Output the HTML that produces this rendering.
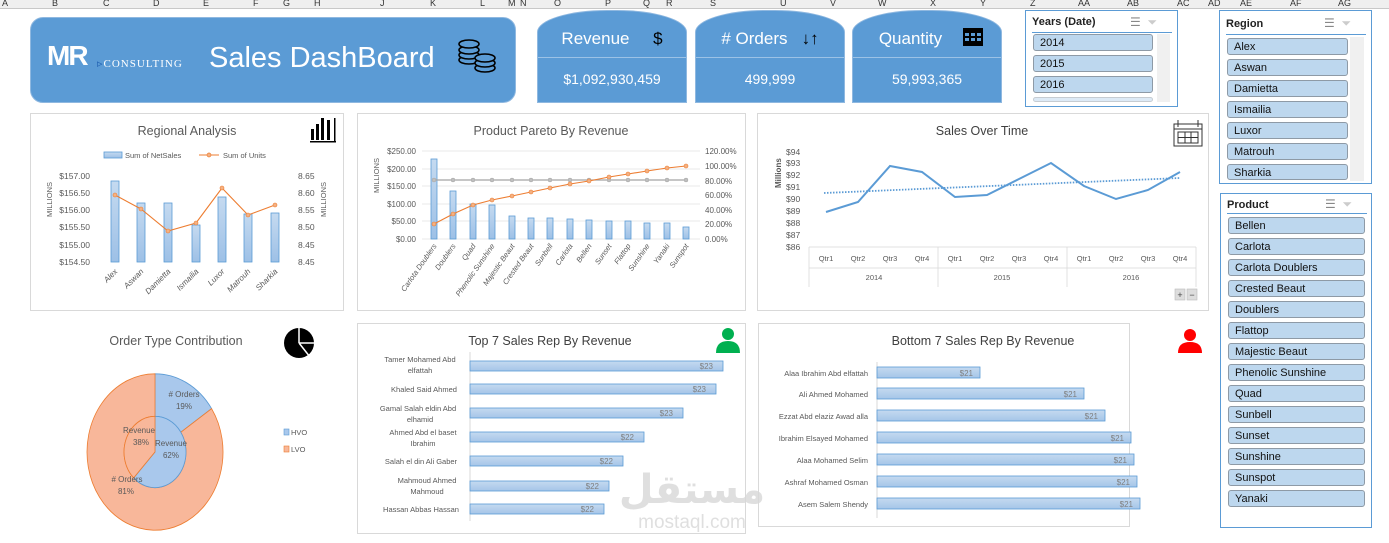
<!DOCTYPE html>
<html><head><meta charset="utf-8"><style>
body{margin:0;width:1389px;height:543px;overflow:hidden;background:#fff;font-family:"Liberation Sans",sans-serif;position:relative}
.a{position:absolute}
.hdr{position:absolute;left:0;top:0;width:1389px;height:8px;background:#efefef;border-bottom:1px solid #c8c8c8;font-size:9px;line-height:6px;color:#333;overflow:hidden}
.hdr span{position:absolute;top:0}
.banner{left:30px;top:17px;width:486px;height:86px;background:#5b9bd5;border-radius:13px;border:1px solid #8fb8e0;box-sizing:border-box}
.kpi{background:#5b9bd5;color:#fff;border-radius:70px 70px 0 0/22px 22px 0 0;border:1px solid #8fb8e0;box-sizing:border-box}
.kpi .t{position:absolute;top:18px;width:100%;text-align:center;font-size:17px}
.kpi .d{position:absolute;top:46px;left:0;right:0;border-top:1px solid #9cc2e6}
.kpi .v{position:absolute;top:60px;width:100%;text-align:center;font-size:14px}
.sl{border:1px solid #5b9bd5;background:#fff;box-sizing:border-box}
.sl .h{position:absolute;left:6px;top:5px;font-size:11px;font-weight:bold;color:#222}
.it{position:absolute;height:17px;background:#bdd7ee;border:1px solid #8e9aa6;border-radius:3px;box-sizing:border-box;font-size:11px;line-height:16px;padding-left:6px;color:#111}
.box{border:1px solid #d9d9d9;box-sizing:border-box}
</style></head><body>
<div class="hdr">
<span style="left:2px">A</span><span style="left:52px">B</span><span style="left:103px">C</span><span style="left:153px">D</span><span style="left:203px">E</span><span style="left:253px">F</span><span style="left:283px">G</span><span style="left:314px">H</span><span style="left:380px">J</span><span style="left:430px">K</span><span style="left:480px">L</span><span style="left:508px">M</span><span style="left:520px">N</span><span style="left:554px">O</span><span style="left:605px">P</span><span style="left:643px">Q</span><span style="left:666px">R</span><span style="left:710px">S</span><span style="left:780px">U</span><span style="left:830px">V</span><span style="left:878px">W</span><span style="left:930px">X</span><span style="left:980px">Y</span><span style="left:1030px">Z</span><span style="left:1078px">AA</span><span style="left:1127px">AB</span><span style="left:1177px">AC</span><span style="left:1208px">AD</span><span style="left:1240px">AE</span><span style="left:1290px">AF</span><span style="left:1338px">AG</span>
</div>

<div class="a banner"></div>
<div class="a" style="left:47px;top:40px;color:#fff;font-weight:bold;font-size:28px;letter-spacing:-2px">MR</div>
<div class="a" style="left:97px;top:57px;color:#fff;font-size:11px;font-family:'Liberation Serif',serif;letter-spacing:1px"><span style="color:#1f5fb0">▹</span>CONSULTING</div>
<div class="a" style="left:209px;top:42px;color:#fff;font-size:29px">Sales DashBoard</div>
<svg class="a" style="left:455px;top:38px" width="50" height="40" viewBox="0 0 50 40" fill="#5b9bd5" stroke="#000" stroke-width="1.6">
<ellipse cx="14" cy="22" rx="10" ry="4"/><ellipse cx="14" cy="17" rx="10" ry="4"/><ellipse cx="14" cy="12" rx="10" ry="4"/><ellipse cx="14" cy="6" rx="10" ry="4"/>
<ellipse cx="30" cy="30" rx="10" ry="4"/><ellipse cx="30" cy="25" rx="10" ry="4"/><ellipse cx="30" cy="20" rx="10" ry="4"/></svg>

<div class="a kpi" style="left:537px;top:10px;width:150px;height:93px"><div class="t">Revenue &nbsp;&nbsp;&nbsp;&nbsp;<span style="color:#000">$</span></div><div class="d"></div><div class="v">$1,092,930,459</div></div>
<div class="a kpi" style="left:695px;top:10px;width:150px;height:93px"><div class="t"># Orders &nbsp;&nbsp;<span style="color:#000">↓↑</span></div><div class="d"></div><div class="v">499,999</div></div>
<div class="a kpi" style="left:852px;top:10px;width:150px;height:93px"><div class="t">Quantity &nbsp;&nbsp;&nbsp;&nbsp;&nbsp;&nbsp;</div><div class="d"></div><div class="v">59,993,365</div></div>
<svg class="a" style="left:962px;top:25px" width="22" height="22" viewBox="0 0 22 22"><rect x="1" y="3" width="20" height="18" fill="#000"/><g fill="#5b9bd5"><rect x="3" y="8" width="4" height="3"/><rect x="9" y="8" width="4" height="3"/><rect x="15" y="8" width="4" height="3"/><rect x="3" y="13" width="4" height="3"/><rect x="9" y="13" width="4" height="3"/><rect x="15" y="13" width="4" height="3"/></g></svg>

<!-- Years slicer -->
<div class="a sl" style="left:1025px;top:10px;width:153px;height:97px"><div class="h">Years (Date)</div>
<div class="a" style="left:6px;top:21px;width:140px;border-top:1px solid #5b9bd5"></div>
<div class="a" style="left:131px;top:23px;width:13px;height:68px;background:#f0f0f0"></div>
<div class="it" style="left:7px;top:23px;width:120px">2014</div>
<div class="it" style="left:7px;top:44px;width:120px">2015</div>
<div class="it" style="left:7px;top:65px;width:120px">2016</div>
<div class="it" style="left:7px;top:86px;width:120px;height:5px;opacity:.5"></div>
<div class="a" style="left:104px;top:4px;color:#888;font-size:12px">☰ &nbsp;<span style="color:#ccc">⏷</span></div></div>

<!-- Region slicer -->
<div class="a sl" style="left:1219px;top:10px;width:153px;height:174px"><div class="h" style="top:7px">Region</div>
<div class="a" style="left:6px;top:23px;width:140px;border-top:1px solid #5b9bd5"></div>
<div class="a" style="left:130px;top:26px;width:14px;height:144px;background:#f0f0f0"></div>
<div class="a" style="left:104px;top:5px;color:#888;font-size:12px">☰ &nbsp;<span style="color:#ccc">⏷</span></div>
<div class="it" style="left:7px;top:27px;width:121px">Alex</div>
<div class="it" style="left:7px;top:48px;width:121px">Aswan</div>
<div class="it" style="left:7px;top:69px;width:121px">Damietta</div>
<div class="it" style="left:7px;top:90px;width:121px">Ismailia</div>
<div class="it" style="left:7px;top:111px;width:121px">Luxor</div>
<div class="it" style="left:7px;top:132px;width:121px">Matrouh</div>
<div class="it" style="left:7px;top:153px;width:121px;height:16px">Sharkia</div></div>

<!-- Product slicer -->
<div class="a sl" style="left:1220px;top:193px;width:152px;height:335px"><div class="h">Product</div>
<div class="a" style="left:6px;top:19px;width:140px;border-top:1px solid #5b9bd5"></div>
<div class="a" style="left:104px;top:3px;color:#888;font-size:12px">☰ &nbsp;<span style="color:#ccc">⏷</span></div>
<div class="it" style="left:7px;top:23px;width:137px">Bellen</div>
<div class="it" style="left:7px;top:44px;width:137px">Carlota</div>
<div class="it" style="left:7px;top:65px;width:137px">Carlota Doublers</div>
<div class="it" style="left:7px;top:86px;width:137px">Crested Beaut</div>
<div class="it" style="left:7px;top:107px;width:137px">Doublers</div>
<div class="it" style="left:7px;top:128px;width:137px">Flattop</div>
<div class="it" style="left:7px;top:149px;width:137px">Majestic Beaut</div>
<div class="it" style="left:7px;top:170px;width:137px">Phenolic Sunshine</div>
<div class="it" style="left:7px;top:191px;width:137px">Quad</div>
<div class="it" style="left:7px;top:212px;width:137px">Sunbell</div>
<div class="it" style="left:7px;top:233px;width:137px">Sunset</div>
<div class="it" style="left:7px;top:254px;width:137px">Sunshine</div>
<div class="it" style="left:7px;top:275px;width:137px">Sunspot</div>
<div class="it" style="left:7px;top:296px;width:137px">Yanaki</div></div>

<div class="a box" style="left:30px;top:113px;width:314px;height:198px"></div>
<div class="a box" style="left:357px;top:113px;width:389px;height:198px"></div>
<div class="a box" style="left:757px;top:113px;width:452px;height:198px"></div>
<div class="a box" style="left:357px;top:323px;width:389px;height:211px"></div>
<div class="a box" style="left:758px;top:323px;width:372px;height:204px"></div>

<svg class="a" style="left:0;top:0" width="1389" height="543" font-family="Liberation Sans, sans-serif">
<defs><linearGradient id="bg" x1="0" y1="0" x2="0" y2="1"><stop offset="0" stop-color="#c5daf0"/><stop offset="1" stop-color="#9dc0e6"/></linearGradient>
<linearGradient id="bh" x1="0" y1="0" x2="0" y2="1"><stop offset="0" stop-color="#c5daf0"/><stop offset="1" stop-color="#a5c5e8"/></linearGradient></defs>
<!-- Regional -->
<text x="187" y="135" font-size="12.5" fill="#595959" text-anchor="middle">Regional Analysis</text>
<g fill="#000"><rect x="311" y="129" width="3" height="11"/><rect x="316" y="124" width="3" height="16"/><rect x="321" y="118" width="3" height="22"/><rect x="327" y="120" width="3" height="20"/><rect x="310" y="141" width="26" height="1.5"/><rect x="334" y="118" width="1.5" height="24"/></g>
<rect x="104" y="152" width="18" height="6" fill="url(#bg)" stroke="#5b9bd5" stroke-width=".8"/><text x="125" y="158" font-size="7.5" fill="#595959">Sum of NetSales</text>
<line x1="199" y1="155" x2="219" y2="155" stroke="#ed7d31"/><circle cx="209" cy="155" r="2" fill="#f4b183" stroke="#ed7d31" stroke-width=".7"/><text x="223" y="158" font-size="7.5" fill="#595959">Sum of Units</text>
<g font-size="8.5" fill="#595959" text-anchor="end"><text x="90" y="179">$157.00</text><text x="90" y="196">$156.50</text><text x="90" y="213">$156.00</text><text x="90" y="230">$155.50</text><text x="90" y="248">$155.00</text><text x="90" y="265">$154.50</text></g>
<g font-size="8.5" fill="#595959"><text x="298" y="179">8.65</text><text x="298" y="196">8.60</text><text x="298" y="213">8.55</text><text x="298" y="230">8.50</text><text x="298" y="248">8.45</text><text x="298" y="265">8.45</text></g>
<text transform="translate(52,217) rotate(-90)" font-size="7.5" fill="#595959">MILLIONS</text>
<text transform="translate(326,217) rotate(-90)" font-size="7.5" fill="#595959">MILLIONS</text>
<g fill="url(#bg)" stroke="#5b9bd5" stroke-width=".8"><rect x="111" y="181" width="8" height="81"/><rect x="137" y="203" width="8" height="59"/><rect x="164" y="203" width="8" height="59"/><rect x="192" y="225" width="8" height="37"/><rect x="218" y="197" width="8" height="65"/><rect x="244" y="214" width="8" height="48"/><rect x="271" y="213" width="8" height="49"/></g>
<polyline points="115,195 141,209 168,231 196,223 222,188 248,215 275,205" fill="none" stroke="#ed7d31" stroke-width="1.1"/>
<g fill="#f4b183" stroke="#ed7d31" stroke-width=".6"><circle cx="115" cy="195" r="2"/><circle cx="141" cy="209" r="2"/><circle cx="168" cy="231" r="2"/><circle cx="196" cy="223" r="2"/><circle cx="222" cy="188" r="2"/><circle cx="248" cy="215" r="2"/><circle cx="275" cy="205" r="2"/></g>
<g font-size="8" fill="#595959" font-style="italic" text-anchor="end"><text transform="translate(118,272) rotate(-45)">Alex</text><text transform="translate(144,272) rotate(-45)">Aswan</text><text transform="translate(171,272) rotate(-45)">Damietta</text><text transform="translate(199,272) rotate(-45)">Ismailia</text><text transform="translate(225,272) rotate(-45)">Luxor</text><text transform="translate(251,272) rotate(-45)">Matrouh</text><text transform="translate(278,272) rotate(-45)">Sharkia</text></g>

<!-- Pareto -->
<text x="551" y="135" font-size="12.5" fill="#595959" text-anchor="middle">Product Pareto By Revenue</text>
<g stroke="#e0e0e0" stroke-width=".7"><line x1="422" y1="151" x2="700" y2="151"/><line x1="422" y1="169" x2="700" y2="169"/><line x1="422" y1="186" x2="700" y2="186"/><line x1="422" y1="204" x2="700" y2="204"/><line x1="422" y1="221" x2="700" y2="221"/><line x1="422" y1="239" x2="700" y2="239"/></g>
<g font-size="8" fill="#595959" text-anchor="end"><text x="416" y="154">$250.00</text><text x="416" y="172">$200.00</text><text x="416" y="189">$150.00</text><text x="416" y="207">$100.00</text><text x="416" y="224">$50.00</text><text x="416" y="242">$0.00</text></g>
<g font-size="8" fill="#595959"><text x="705" y="154">120.00%</text><text x="705" y="169">100.00%</text><text x="705" y="184">80.00%</text><text x="705" y="198">60.00%</text><text x="705" y="213">40.00%</text><text x="705" y="227">20.00%</text><text x="705" y="242">0.00%</text></g>
<text transform="translate(379,193) rotate(-90)" font-size="7.5" fill="#595959">MILLIONS</text>
<g fill="url(#bg)" stroke="#5b9bd5" stroke-width=".8">
<rect x="431" y="159" width="6" height="80"/><rect x="450" y="191" width="6" height="48"/><rect x="470" y="204" width="6" height="35"/><rect x="489" y="205" width="6" height="34"/><rect x="509" y="216" width="6" height="23"/><rect x="528" y="218" width="6" height="21"/><rect x="547" y="218" width="6" height="21"/><rect x="567" y="219" width="6" height="20"/><rect x="586" y="220" width="6" height="19"/><rect x="606" y="221" width="6" height="18"/><rect x="625" y="221" width="6" height="18"/><rect x="644" y="223" width="6" height="16"/><rect x="664" y="223" width="6" height="16"/><rect x="683" y="227" width="6" height="12"/></g>
<line x1="434" y1="180" x2="686" y2="180" stroke="#a5a5a5" stroke-width="1.2"/>
<g fill="#bfbfbf" stroke="#a5a5a5" stroke-width=".5"><circle cx="434" cy="180" r="2"/><circle cx="453" cy="180" r="2"/><circle cx="473" cy="180" r="2"/><circle cx="492" cy="180" r="2"/><circle cx="512" cy="180" r="2"/><circle cx="531" cy="180" r="2"/><circle cx="550" cy="180" r="2"/><circle cx="570" cy="180" r="2"/><circle cx="589" cy="180" r="2"/><circle cx="609" cy="180" r="2"/><circle cx="628" cy="180" r="2"/><circle cx="647" cy="180" r="2"/><circle cx="667" cy="180" r="2"/><circle cx="686" cy="180" r="2"/></g>
<polyline points="434,224 453,214 473,205 492,200 512,196 531,192 550,188 570,184 589,181 609,177 628,174 647,171 667,168 686,166" fill="none" stroke="#ed7d31" stroke-width="1.1"/>
<g fill="#f4b183" stroke="#ed7d31" stroke-width=".6"><circle cx="434" cy="224" r="2"/><circle cx="453" cy="214" r="2"/><circle cx="473" cy="205" r="2"/><circle cx="492" cy="200" r="2"/><circle cx="512" cy="196" r="2"/><circle cx="531" cy="192" r="2"/><circle cx="550" cy="188" r="2"/><circle cx="570" cy="184" r="2"/><circle cx="589" cy="181" r="2"/><circle cx="609" cy="177" r="2"/><circle cx="628" cy="174" r="2"/><circle cx="647" cy="171" r="2"/><circle cx="667" cy="168" r="2"/><circle cx="686" cy="166" r="2"/></g>
<g font-size="7.5" fill="#595959" font-style="italic" text-anchor="end">
<text transform="translate(437,246) rotate(-55)">Carlota Doublers</text><text transform="translate(456,246) rotate(-55)">Doublers</text><text transform="translate(476,246) rotate(-55)">Quad</text><text transform="translate(495,246) rotate(-55)">Phenolic Sunshine</text><text transform="translate(515,246) rotate(-55)">Majestic Beaut</text><text transform="translate(534,246) rotate(-55)">Crested Beaut</text><text transform="translate(553,246) rotate(-55)">Sunbell</text><text transform="translate(573,246) rotate(-55)">Carlota</text><text transform="translate(592,246) rotate(-55)">Bellen</text><text transform="translate(612,246) rotate(-55)">Sunset</text><text transform="translate(631,246) rotate(-55)">Flattop</text><text transform="translate(650,246) rotate(-55)">Sunshine</text><text transform="translate(670,246) rotate(-55)">Yanaki</text><text transform="translate(689,246) rotate(-55)">Sunspot</text></g>

<!-- Sales over time -->
<text x="982" y="135" font-size="12.5" fill="#404040" text-anchor="middle">Sales Over Time</text>
<g fill="none" stroke="#333" stroke-width="1"><rect x="1174" y="124" width="28" height="22" fill="#fff"/><line x1="1174" y1="129" x2="1202" y2="129"/><line x1="1178" y1="120" x2="1178" y2="127"/><line x1="1198" y1="120" x2="1198" y2="127"/><rect x="1178" y="132" width="20" height="11"/><line x1="1178" y1="137.5" x2="1198" y2="137.5"/><line x1="1185" y1="132" x2="1185" y2="143"/><line x1="1191" y1="132" x2="1191" y2="143"/></g>
<g font-size="8.5" fill="#595959"><text x="786" y="155">$94</text><text x="786" y="166">$93</text><text x="786" y="178">$92</text><text x="786" y="190">$91</text><text x="786" y="202">$90</text><text x="786" y="214">$89</text><text x="786" y="226">$88</text><text x="786" y="238">$87</text><text x="786" y="250">$86</text></g>
<text transform="translate(781,188) rotate(-90)" font-size="8" fill="#595959" font-weight="bold">Millions</text>
<g stroke="#d9d9d9" stroke-width=".8"><line x1="809" y1="247" x2="1196" y2="247"/><line x1="809" y1="247" x2="809" y2="287"/><line x1="938" y1="247" x2="938" y2="287"/><line x1="1067" y1="247" x2="1067" y2="287"/><line x1="1196" y1="247" x2="1196" y2="287"/><line x1="809" y1="268" x2="1196" y2="268"/></g>
<g font-size="7.5" fill="#595959" text-anchor="middle"><text x="826" y="261">Qtr1</text><text x="858" y="261">Qtr2</text><text x="890" y="261">Qtr3</text><text x="922" y="261">Qtr4</text><text x="955" y="261">Qtr1</text><text x="987" y="261">Qtr2</text><text x="1019" y="261">Qtr3</text><text x="1051" y="261">Qtr4</text><text x="1084" y="261">Qtr1</text><text x="1116" y="261">Qtr2</text><text x="1148" y="261">Qtr3</text><text x="1180" y="261">Qtr4</text>
<text x="874" y="280">2014</text><text x="1002" y="280">2015</text><text x="1131" y="280">2016</text></g>
<line x1="824" y1="193" x2="1180" y2="178" stroke="#5b9bd5" stroke-width="1.8" stroke-dasharray="1.5 1.5"/>
<polyline points="826,212 858,202 890,166 922,172 955,197 987,195 1019,179 1051,163 1084,186 1116,199 1148,190 1180,172" fill="none" stroke="#5b9bd5" stroke-width="2"/>
<rect x="1175" y="289" width="10" height="11" fill="#ddd" stroke="#bbb" stroke-width=".6"/><rect x="1187" y="289" width="10" height="11" fill="#ddd" stroke="#bbb" stroke-width=".6"/>
<text x="1180" y="298" font-size="9" text-anchor="middle" fill="#444">+</text><text x="1192" y="298" font-size="9" text-anchor="middle" fill="#444">−</text>

<!-- Order type -->
<text x="176" y="345" font-size="12.5" fill="#595959" text-anchor="middle">Order Type Contribution</text>
<circle cx="299" cy="343" r="15" fill="#000"/><path d="M299,343 L299,326 M299,343 L316,343 M299,343 L310,357" stroke="#fff" stroke-width="1.5"/>
<g transform="translate(155,452) scale(1,1.15)">
<path d="M0,-68 A68,68 0 0 1 56.6,-37.7 L25.8,-17.2 A31,31 0 0 0 0,-31 Z" fill="#a9c8ec" stroke="#5b9bd5" stroke-width=".8"/>
<path d="M56.6,-37.7 A68,68 0 1 1 0,-68 L0,-31 A31,31 0 1 0 25.8,-17.2 Z" fill="#f8b79a" stroke="#ed7d31" stroke-width=".8"/>
<path d="M0,-31 A31,31 0 1 1 -21.3,22.5 L0,0 Z" fill="#a9c8ec" stroke="#5b9bd5" stroke-width=".8"/>
<path d="M-21.3,22.5 A31,31 0 0 1 0,-31 L0,0 Z" fill="#f8b79a" stroke="#ed7d31" stroke-width=".8"/></g>
<g font-size="8" fill="#595959" text-anchor="middle"><text x="184" y="397"># Orders</text><text x="184" y="409">19%</text><text x="139" y="433">Revenue</text><text x="141" y="445">38%</text><text x="171" y="446">Revenue</text><text x="171" y="458">62%</text><text x="127" y="482"># Orders</text><text x="126" y="494">81%</text></g>
<rect x="284" y="429" width="5" height="6" fill="#a9c8ec" stroke="#5b9bd5" stroke-width=".6"/><text x="291" y="435" font-size="7.5" fill="#595959">HVO</text>
<rect x="284" y="446" width="5" height="6" fill="#f8b79a" stroke="#ed7d31" stroke-width=".6"/><text x="291" y="452" font-size="7.5" fill="#595959">LVO</text>

<!-- Top 7 -->
<text x="550" y="345" font-size="12.5" fill="#404040" text-anchor="middle">Top 7 Sales Rep By Revenue</text>
<circle cx="728" cy="334" r="6" fill="#00b050"/><path d="M716,353 Q716,341 728,341 Q740,341 740,353 Z" fill="#00b050"/>
<line x1="470" y1="352" x2="470" y2="521" stroke="#d9d9d9"/>
<g fill="url(#bh)" stroke="#5b9bd5" stroke-width=".8"><rect x="470" y="361" width="253" height="10"/><rect x="470" y="384" width="246" height="10"/><rect x="470" y="408" width="213" height="10"/><rect x="470" y="432" width="174" height="10"/><rect x="470" y="456" width="153" height="10"/><rect x="470" y="481" width="139" height="10"/><rect x="470" y="504" width="134" height="10"/></g>
<g font-size="8" fill="#7f7f7f" text-anchor="end"><text x="713" y="369">$23</text><text x="706" y="392">$23</text><text x="673" y="416">$23</text><text x="634" y="440">$22</text><text x="613" y="464">$22</text><text x="599" y="489">$22</text><text x="594" y="512">$22</text></g>
<g font-size="7.5" fill="#595959" text-anchor="middle"><text x="420" y="362">Tamer Mohamed Abd</text><text x="420" y="373">elfattah</text><text x="424" y="392">Khaled Said Ahmed</text><text x="418" y="411">Gamal Salah eldin Abd</text><text x="420" y="422">elhamid</text><text x="423" y="435">Ahmed Abd el baset</text><text x="423" y="446">Ibrahim</text><text x="421" y="464">Salah el din Ali Gaber</text><text x="427" y="483">Mahmoud Ahmed</text><text x="427" y="494">Mahmoud</text><text x="421" y="512">Hassan Abbas Hassan</text></g>

<!-- Bottom 7 -->
<text x="983" y="345" font-size="12.5" fill="#404040" text-anchor="middle">Bottom 7 Sales Rep By Revenue</text>
<circle cx="1190" cy="335" r="6" fill="#f00"/><path d="M1178,353 Q1178,342 1190,342 Q1202,342 1202,353 Z" fill="#f00"/>
<line x1="877" y1="362" x2="877" y2="518" stroke="#d9d9d9"/>
<g fill="url(#bh)" stroke="#5b9bd5" stroke-width=".8"><rect x="877" y="367" width="103" height="11"/><rect x="877" y="388" width="207" height="11"/><rect x="877" y="410" width="228" height="11"/><rect x="877" y="432" width="254" height="11"/><rect x="877" y="454" width="257" height="11"/><rect x="877" y="476" width="260" height="11"/><rect x="877" y="498" width="263" height="11"/></g>
<g font-size="8" fill="#7f7f7f" text-anchor="end"><text x="973" y="376">$21</text><text x="1077" y="397">$21</text><text x="1098" y="419">$21</text><text x="1124" y="441">$21</text><text x="1127" y="463">$21</text><text x="1130" y="485">$21</text><text x="1133" y="507">$21</text></g>
<g font-size="7.5" fill="#595959" text-anchor="end"><text x="868" y="376">Alaa Ibrahim Abd elfattah</text><text x="868" y="397">Ali Ahmed Mohamed</text><text x="868" y="419">Ezzat Abd elaziz Awad alla</text><text x="868" y="441">Ibrahim Elsayed Mohamed</text><text x="868" y="463">Alaa Mohamed Selim</text><text x="868" y="485">Ashraf Mohamed Osman</text><text x="868" y="507">Asem Salem Shendy</text></g>

<!-- watermark -->
<text x="692" y="503" font-size="40" fill="#d8d8d8" opacity=".8" text-anchor="middle" font-family="Noto Sans CJK SC, DejaVu Sans, sans-serif" font-weight="bold">مستقل</text>
<text x="692" y="528" font-size="19" fill="#d8d8d8" opacity=".8" text-anchor="middle">mostaql.com</text>
</svg>
</body></html>
